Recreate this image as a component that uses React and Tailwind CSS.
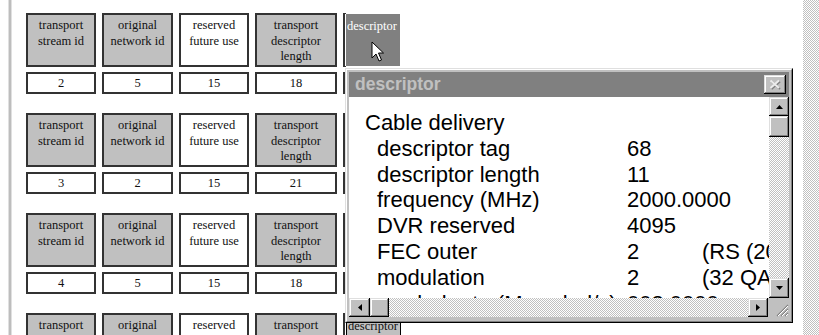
import React from "react";

const dither =
  "bg-[image:repeating-conic-gradient(#c0c0c0_0_25%,#ffffff_0_50%)] bg-[length:2px_2px]";
const raised =
  "bg-[#c0c0c0] shadow-[inset_-1px_-1px_#000,inset_1px_1px_#dfdfdf,inset_-2px_-2px_#808080,inset_2px_2px_#fff]";

const columns = [
  { lines: ["transport", "stream id"], w: "w-[70px]", fill: "bg-[#c0c0c0]" },
  { lines: ["original", "network id"], w: "w-[71px]", fill: "bg-[#c0c0c0]" },
  { lines: ["reserved", "future use"], w: "w-[70px]", fill: "bg-white" },
  { lines: ["transport", "descriptor", "length"], w: "w-[82px]", fill: "bg-[#c0c0c0]" },
];

const groups = [
  { values: ["2", "5", "15", "18"], hovered: true },
  { values: ["3", "2", "15", "21"] },
  { values: ["4", "5", "15", "18"] },
  { values: ["3", "5", "15", "18"] },
];

const fields = [
  ["descriptor tag", "68"],
  ["descriptor length", "11"],
  ["frequency (MHz)", "2000.0000"],
  ["DVR reserved", "4095"],
  ["FEC outer", "2", "(RS (204/188))"],
  ["modulation", "2", "(32 QAM)"],
  ["symbol rate (Msymbol/s)", "003.0000"],
];

const Arrow = ({ dir }) => {
  const pts = {
    up: "0,4 7,4 3.5,0",
    down: "0,0 7,0 3.5,4",
    left: "4,0 4,7 0,3.5",
    right: "0,0 0,7 4,3.5",
  }[dir];
  const vertical = dir === "up" || dir === "down";
  return (
    <svg width={vertical ? 7 : 4} height={vertical ? 4 : 7}>
      <polygon points={pts} fill="#000" />
    </svg>
  );
};

const Cursor = () => (
  <svg width="14" height="22" className="absolute left-[25px] top-[27px]">
    <polygon
      points="1,1 1,17 5,13 8,20 10.5,19 7.5,12 12.5,12"
      fill="#fff"
      stroke="#000"
      strokeWidth="1"
    />
  </svg>
);

function Group({ values, hovered }) {
  return (
    <div className="flex flex-col gap-[5px]">
      <div className="flex gap-[6px] h-[54px]">
        {columns.map((c, i) => (
          <div
            key={i}
            className={`${c.w} ${c.fill} border-2 border-[#333] text-center text-[12.5px] leading-[15.5px] pt-[3px] text-[#111]`}
          >
            {c.lines.map((l) => (
              <div key={l}>{l}</div>
            ))}
          </div>
        ))}
        <div className="flex">
          <div className="w-[3px] border-l-2 border-y border-[#333]" />
          {hovered ? (
            <div className="relative w-[54px] h-[52px] mt-[1px] bg-[#808080] text-white text-[12.5px] leading-[15px] pl-[1px] pt-[5px]">
              descriptor
              <Cursor />
            </div>
          ) : (
            <div className="w-[55px] h-[52px] mt-[1px] bg-[#c0c0c0] border border-black text-[#111] text-[12.5px] leading-[15px] pl-[1px] pt-[4px]">
              descriptor
            </div>
          )}
        </div>
      </div>
      <div className="flex gap-[6px] h-[22px]">
        {columns.map((c, i) => (
          <div
            key={i}
            className={`${c.w} bg-white border-2 border-[#333] flex items-center justify-center text-[12.5px] text-[#111]`}
          >
            {values[i]}
          </div>
        ))}
        <div className="w-[3px] border-l-2 border-y border-[#333]" />
      </div>
    </div>
  );
}

function DescriptorWindow() {
  return (
    <div className="absolute left-[345px] top-[68px] w-[448px] h-[255px] border border-t-[#dfdfdf] border-l-[#dfdfdf] border-r-black border-b-black font-['Liberation_Sans',Arial,sans-serif]">
      <div className="h-full border border-t-white border-l-white border-r-[#808080] border-b-[#808080] bg-[#c0c0c0] p-[2px] flex flex-col">
        <div className="h-[25px] shrink-0 bg-[#808080] flex items-center justify-between pl-[6px] pr-[3px]">
          <span className="text-[17.5px] font-bold text-[#c0c0c0] leading-none">descriptor</span>
          <div className={`w-[22px] h-[19px] flex items-center justify-center ${raised}`}>
            <svg width="12" height="11">
              <path d="M2.5 2.5L11 10M11 2.5L2.5 10" stroke="#808080" strokeWidth="2" />
              <path d="M1.5 1.5L10 9M10 1.5L1.5 9" stroke="#ececec" strokeWidth="2" />
            </svg>
          </div>
        </div>
        <div className="flex h-[201px] shrink-0">
          <div className="flex-1 bg-white overflow-hidden pt-[13px] pl-[16px] text-[22px] leading-[25.8px] text-black whitespace-nowrap">
            <div>Cable delivery</div>
            {fields.map(([label, value, note]) => (
              <div key={label} className="flex pl-[12px]">
                <span className="w-[250px] shrink-0">{label}</span>
                <span className="w-[75px] shrink-0">{value}</span>
                {note && <span>{note}</span>}
              </div>
            ))}
          </div>
          <div className="w-[20px] flex flex-col">
            <div className={`h-[19px] flex items-center justify-center ${raised}`}>
              <Arrow dir="up" />
            </div>
            <div className={`h-[21px] ${raised}`} />
            <div className={`flex-1 ${dither}`} />
            <div className={`h-[20px] flex items-center justify-center ${raised}`}>
              <Arrow dir="down" />
            </div>
          </div>
        </div>
        <div className="flex h-[19px] shrink-0">
          <div className={`w-[21px] flex items-center justify-center ${raised}`}>
            <Arrow dir="left" />
          </div>
          <div className={`w-[19px] ${raised}`} />
          <div className={`flex-1 ${dither}`} />
          <div className={`w-[20px] flex items-center justify-center ${raised}`}>
            <Arrow dir="right" />
          </div>
          <div className="w-[21px] bg-[#c0c0c0] flex items-end justify-end">
            <svg width="14" height="14">
              <path d="M13 2L2 13M13 6L6 13M13 10L10 13" stroke="#808080" strokeWidth="1.2" />
              <path d="M13 3L3 13M13 7L7 13M13 11L11 13" stroke="#fff" strokeWidth="1" />
            </svg>
          </div>
        </div>
      </div>
    </div>
  );
}

export default function App() {
  return (
    <div className="relative w-[819px] h-[335px] overflow-hidden bg-white flex font-['Liberation_Serif','Times_New_Roman',serif]">
      <div className="ml-[8px] w-[4px] h-full bg-[#bdbdbd] border-x border-[#e0e0e0]" />
      <div className="flex-1 pl-[14px] pt-[13px] flex flex-col gap-[19px]">
        {groups.map((g, i) => (
          <Group key={i} values={g.values} hovered={g.hovered} />
        ))}
      </div>
      <div className={`w-[16px] h-full ${dither}`} />
      <DescriptorWindow />
    </div>
  );
}
